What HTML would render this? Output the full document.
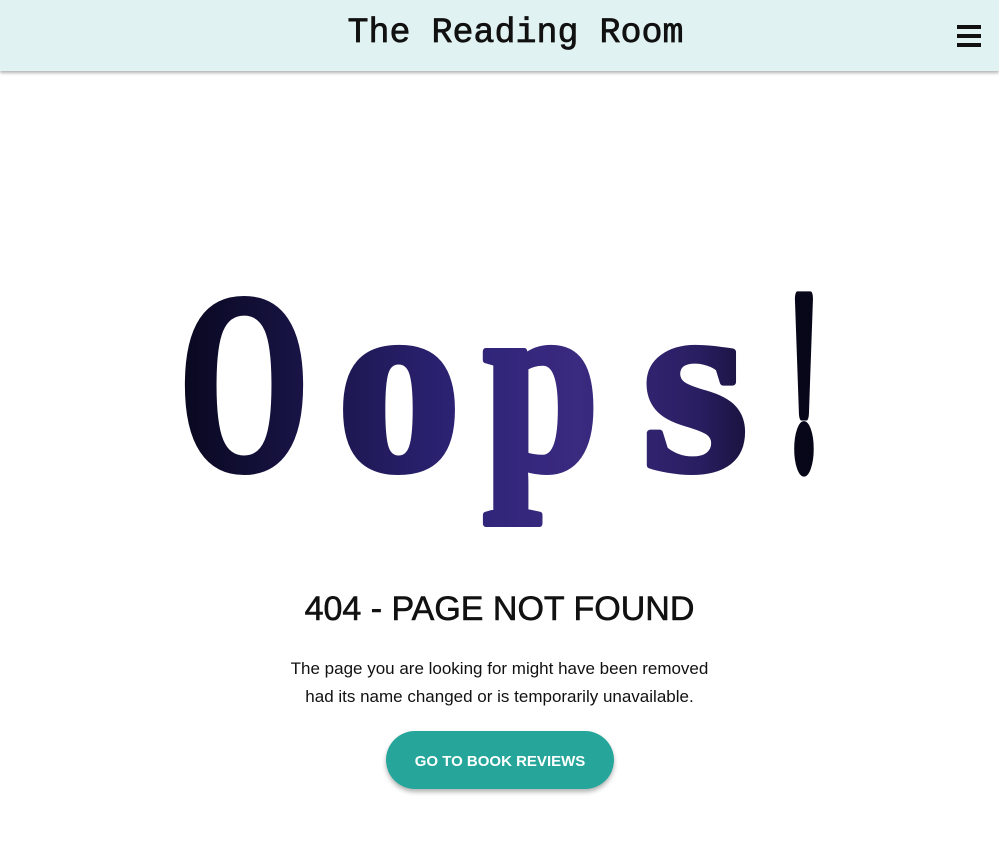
<!DOCTYPE html>
<html><head><style>
html,body{margin:0;padding:0;width:999px;height:844px;overflow:hidden;background:#fff;font-family:"Liberation Sans",sans-serif}
.hdr{position:absolute;left:0;top:0;width:999px;height:71px;background:#e0f2f1;box-shadow:0 2px 3px rgba(0,0,0,.3)}
.title{position:absolute;left:0;width:999px;top:13px;text-align:center;font-family:"Liberation Mono",monospace;font-size:35px;color:#111;letter-spacing:0px;-webkit-text-stroke:.7px #111;padding-left:32px;box-sizing:border-box}
.menu{position:absolute;left:957px;top:25px;width:24px}
.menu div{height:4px;background:#111;margin-bottom:5px}
svg{position:absolute;left:0;top:0}
h1{position:absolute;left:0;width:999px;top:590px;margin:0;text-align:center;font-size:34px;font-weight:normal;color:#111;-webkit-text-stroke:.6px #111}
p{position:absolute;left:0;width:999px;top:655px;margin:0;text-align:center;font-size:17px;line-height:28px;color:#111}
.btn{position:absolute;left:386px;top:731px;width:228px;height:58px;border-radius:29px;background:#26a69a;color:#fff;font-weight:bold;font-size:15px;line-height:61px;text-align:center;box-shadow:0 3px 5px rgba(0,0,0,.3)}
</style></head><body>
<div class="hdr"><div class="title">The Reading Room</div><div class="menu"><div></div><div></div><div></div></div></div>
<svg width="999" height="600" viewBox="0 0 999 600">
<defs><linearGradient id="g" x1="170" y1="0" x2="830" y2="0" gradientUnits="userSpaceOnUse">
<stop offset="0" stop-color="#08071c"/><stop offset="0.25" stop-color="#1c1750"/><stop offset="0.45" stop-color="#2e2478"/><stop offset="0.62" stop-color="#3a2a80"/><stop offset="0.8" stop-color="#2a1e62"/><stop offset="0.95" stop-color="#08071a"/></linearGradient></defs>
<g fill="url(#g)" stroke="url(#g)" stroke-width="7" stroke-linejoin="round" font-family="Liberation Serif, serif" font-weight="bold" font-size="256">
<text x="179" y="469" textLength="130" lengthAdjust="spacingAndGlyphs">O</text>
<text x="337" y="469" textLength="124" lengthAdjust="spacingAndGlyphs">o</text>
<text x="483" y="469" textLength="116" lengthAdjust="spacingAndGlyphs">p</text>
<text x="642" y="469" textLength="106" lengthAdjust="spacingAndGlyphs">s</text>
<text x="789" y="466" textLength="30" lengthAdjust="spacingAndGlyphs" stroke-width="14">!</text>
</g>
</svg>
<h1>404 - PAGE NOT FOUND</h1>
<p>The page you are looking for might have been removed<br>had its name changed or is temporarily unavailable.</p>
<div class="btn">GO TO BOOK REVIEWS</div>
</body></html>
